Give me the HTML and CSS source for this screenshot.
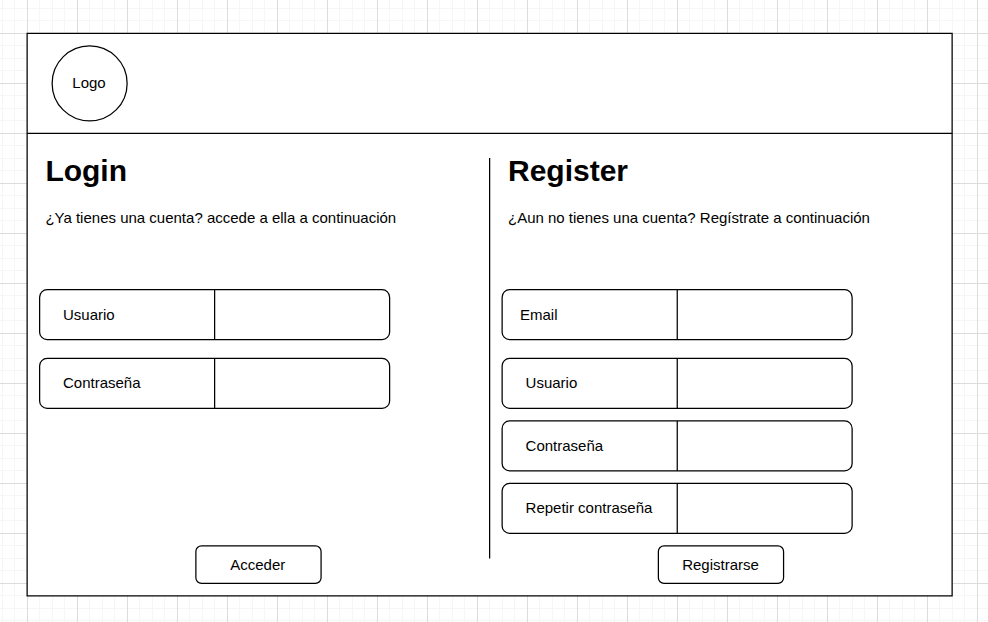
FILE: index.html
```html
<!DOCTYPE html>
<html lang="es">
<head>
<meta charset="utf-8">
<title>Login / Register</title>
<link rel="stylesheet" href="styles.css">
</head>
<body>
<main class="board">
  <svg class="outline"><rect x=".125" y=".375" width="925" height="562.5"/></svg>
  <header class="header">
    <svg class="outline"><path d="M.125 100.375H925.125"/></svg>
    <div class="logo"><svg class="outline"><circle cx="37.625" cy="37.375" r="37.5"/></svg><span>Logo</span></div>
  </header>
  <div class="columns">
    <section class="column login">
      <svg class="outline"><path d="M462.625 25V425.375"/></svg>
      <h1>Login</h1>
      <p>¿Ya tienes una cuenta? accede a ella a continuación</p>
      <div class="field first"><svg class="outline"><rect x="-.375" y="-.375" width="350" height="50" rx="7.5"/><path d="M174.625-.375v50"/></svg><span>Usuario</span></div>
      <div class="field second"><svg class="outline"><rect x="-.375" y=".375" width="350" height="50" rx="7.5"/><path d="M174.625.375v50"/></svg><span>Contraseña</span></div>
      <div class="button"><svg class="outline"><rect x="-.125" y="-.125" width="125.2" height="37.5" rx="5.625"/></svg><span>Acceder</span></div>
    </section>
    <section class="column register">
      <h1>Register</h1>
      <p>¿Aun no tienes una cuenta? Regístrate a continuación</p>
      <div class="field first email"><svg class="outline"><rect x=".125" y="-.375" width="350" height="50" rx="7.5"/><path d="M175.25-.375v50"/></svg><span>Email</span></div>
      <div class="field second"><svg class="outline"><rect x=".125" y=".375" width="350" height="50" rx="7.5"/><path d="M175.25.375v50"/></svg><span>Usuario</span></div>
      <div class="field third"><svg class="outline"><rect x=".125" y="-.125" width="350" height="50" rx="7.5"/><path d="M175.25-.125v50"/></svg><span>Contraseña</span></div>
      <div class="field fourth"><svg class="outline"><rect x=".125" y=".375" width="350" height="50" rx="7.5"/><path d="M175.25.375v50"/></svg><span>Repetir contraseña</span></div>
      <div class="button"><svg class="outline"><rect x=".375" y="-.125" width="125.2" height="37.5" rx="5.625"/></svg><span>Registrarse</span></div>
    </section>
  </div>
</main>
</body>
</html>
```
FILE: styles.css
```css
* { box-sizing: border-box; }
html, body { margin: 0; height: 100%; overflow: hidden; }
body {
  display: flex;
  align-items: flex-start;
  padding: 33px 0 0 27px;
  font: 15px/18px "Liberation Sans", Arial, sans-serif;
  color: #000;
  background-color: #fff;
  background-image:
    linear-gradient(90deg, #dcdcdc 1px, transparent 1px),
    linear-gradient(#dcdcdc 1px, transparent 1px),
    linear-gradient(90deg, transparent 12px, #f6f6f6 12px 13px, transparent 13px 25px, #f6f6f6 25px 26px, transparent 26px 37px, #f6f6f6 37px 38px, transparent 38px),
    linear-gradient(transparent 12px, #f6f6f6 12px 13px, transparent 13px 25px, #f6f6f6 25px 26px, transparent 26px 37px, #f6f6f6 37px 38px, transparent 38px);
  background-size: 50px 50px;
  background-position: 27px 33px;
}
.board { position: relative; width: 925px; height: 563px; background: #fff; }
.outline {
  position: absolute;
  top: 0;
  left: 0;
  width: 100%;
  height: 100%;
  overflow: visible;
  fill: none;
  stroke: #000;
  stroke-width: 1.25;
  pointer-events: none;
}
.header { position: relative; display: flex; align-items: flex-start; height: 100px; padding: 13px 0 0 25px; }
.logo { position: relative; display: flex; align-items: center; justify-content: center; width: 75px; height: 75px; padding: 0 1px 2px 0; }
.columns { display: grid; grid-template-columns: 463px 462px; height: 463px; }
.column { position: relative; display: flex; flex-direction: column; align-items: flex-start; padding: 20px 0 12px 13px; }
.register { padding-left: 12px; }
h1 { margin: 0 0 20px 6px; font-size: 30px; line-height: 36px; }
p { margin: 0 0 63px 6px; white-space: nowrap; }
.login h1, .login p { margin-left: 5.4px; }
.field { position: relative; display: flex; align-items: center; flex: none; width: 350px; height: 50px; padding-left: 23px; }
.second { margin-top: 18px; }
.third { margin-top: 13px; }
.fourth { margin-top: 12px; }
.register .field { padding-left: 23.6px; }
.register .email { padding-left: 18px; }
.button { position: relative; display: flex; align-items: center; justify-content: center; width: 125px; height: 38px; margin: auto 0 0 156px; }
.login .button { padding-right: 1.5px; }
```
